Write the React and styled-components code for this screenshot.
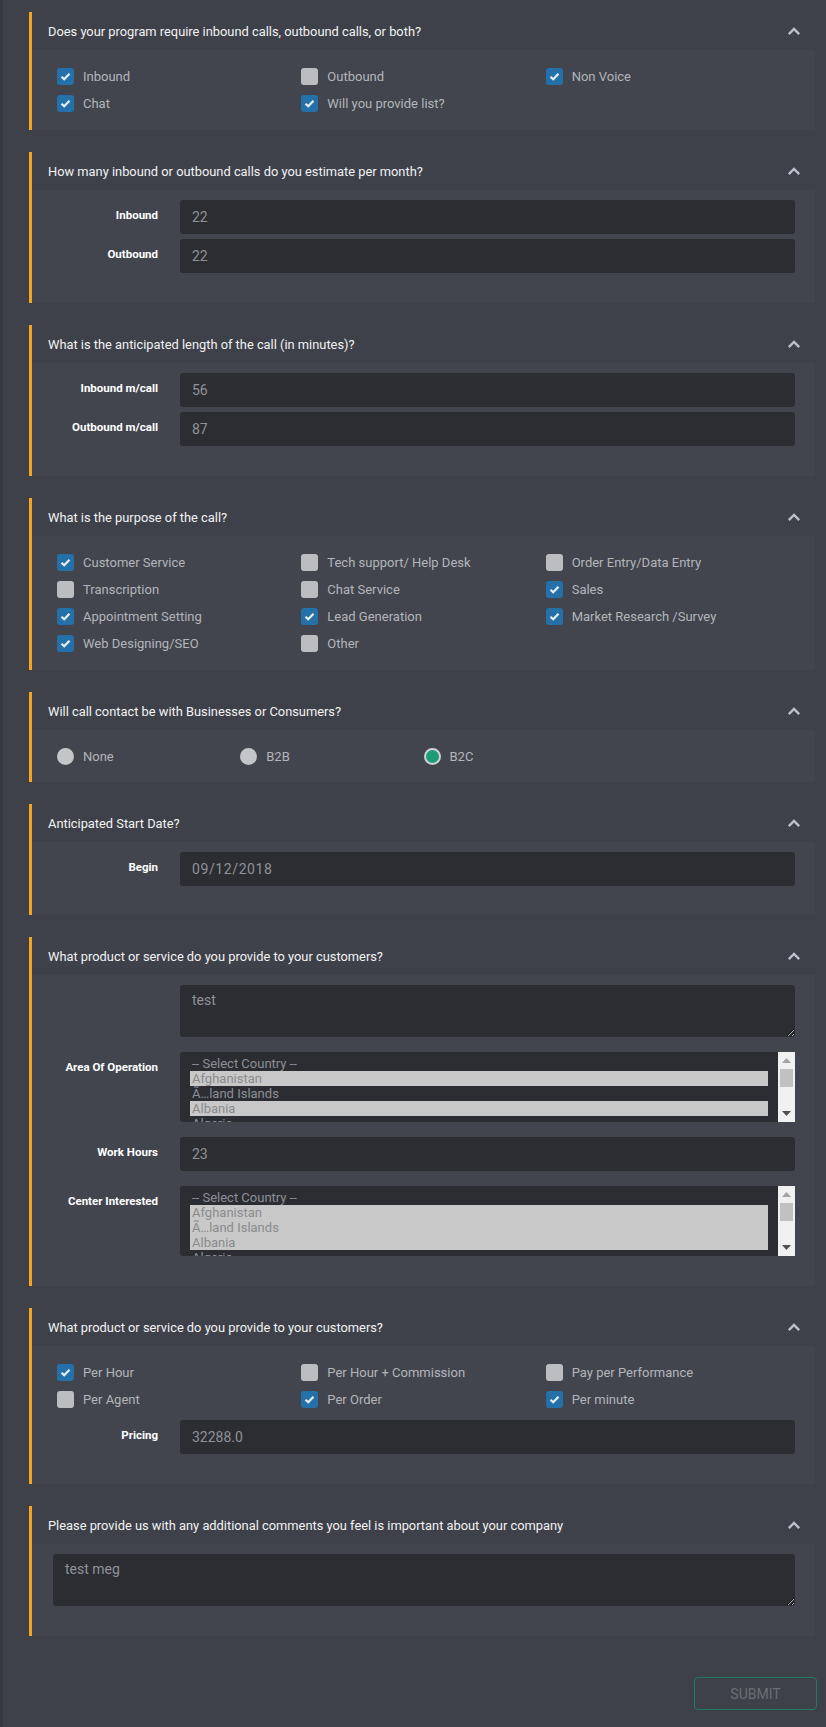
import React from "react";
import styled, { createGlobalStyle } from "styled-components";

const GlobalStyle = createGlobalStyle`
    body {
        margin: 0;
        background: #3e4149;
        font-family: Roboto, "Liberation Sans", sans-serif;
    }
`

const Page = styled.div`
    display: flex;
    flex-direction: column;
    gap: 22px;
    min-height: 1727px;
    box-sizing: border-box;
    border-left: 3px solid #383a41;
    padding: 12px 11px 17px 26px;
`

const Section = styled.section`
    border-left: 3px solid #f3a521;
`

const Head = styled.div`
    display: flex;
    align-items: center;
    justify-content: space-between;
    height: 38px;
    padding: 0 14px 0 16px;
    color: #f2f3f5;
    font-size: 12.85px;
`

const Body = styled.div`
    background: #42454e;
`

const CheckGrid = styled.div`
    display: grid;
    grid-template-columns: repeat(${p => p.$cols || 3}, 1fr);
    row-gap: 10px;
    padding: 18px 25px ${p => p.$bottom ?? 18}px;
`

const Item = styled.label`
    display: flex;
    align-items: center;
    gap: 9px;
    height: 17px;
    font-size: 13px;
    color: #b3b5ba;
`

const Box = styled.span`
    display: flex;
    align-items: center;
    justify-content: center;
    width: 17px;
    height: 17px;
    border-radius: 3px;
    background: ${p => p.$on ? "#2471a9" : "#bcbdc1"};
`

const Radio = styled.span`
    width: 17px;
    height: 17px;
    border-radius: 50%;
    box-sizing: border-box;
    background: ${p => p.$on ? "#1f9b75" : "#c4c5c9"};
    border: ${p => p.$on ? "2px solid #cdd3d6" : "none"};
`

const Form = styled.div`
    display: flex;
    flex-direction: column;
    gap: ${p => p.$gap}px;
    padding: ${p => p.$top ?? 10}px 20px ${p => p.$bottom ?? 30}px ${p => p.$left ?? 0}px;
`

const Row = styled.div`
    display: grid;
    grid-template-columns: 126px 1fr;
    column-gap: 22px;
    align-items: start;
`

const Label = styled.span`
    text-align: right;
    font-size: 11.5px;
    line-height: 13px;
    font-weight: 700;
    color: #ffffff;
    padding-top: 9px;
`

const Input = styled.input`
    height: 34px;
    box-sizing: border-box;
    background: #2c2d33;
    border: none;
    border-radius: 3px;
    padding: 0 12px;
    color: #8f9299;
    font-family: inherit;
    font-size: 14px;
    outline: none;
    letter-spacing: ${p => p.$wide ? "0.6px" : "0"};
`

const Area = styled.textarea`
    display: block;
    width: 100%;
    height: 52px;
    box-sizing: border-box;
    background: #2c2d33;
    border: none;
    border-radius: 3px;
    padding: 7px 12px;
    color: #8f9299;
    font-family: inherit;
    font-size: 14px;
    resize: vertical;
    outline: none;
`

const ListBox = styled.div`
    display: flex;
    height: 70px;
    background: #2c2d33;
    border-radius: 3px 0 0 3px;
    overflow: hidden;
`

const Options = styled.div`
    flex: 1;
    padding: 4px 10px 0;
    overflow: hidden;
`

const Option = styled.div`
    height: 15px;
    line-height: 15px;
    padding: 0 2px;
    font-size: 13px;
    white-space: nowrap;
    color: ${p => p.$sel ? "#8b8b8e" : "#8c8f95"};
    background: ${p => p.$sel ? "#c8c8c8" : "transparent"};
`

const Track = styled.div`
    display: flex;
    flex-direction: column;
    width: 17px;
    background: #f1f1f1;
`

const Arrow = styled.div`
    display: flex;
    align-items: center;
    justify-content: center;
    height: 17px;
`

const Thumb = styled.div`
    height: 18px;
    margin: 0 2px;
    background: #c1c1c1;
`

const Spacer = styled.div`
    flex: 1;
`

const Footer = styled.div`
    display: flex;
    justify-content: flex-end;
    padding-top: 19px;
    margin-right: -2px;
`

const Submit = styled.button`
    width: 123px;
    height: 33px;
    background: transparent;
    border: 1px solid #1f7c5d;
    border-radius: 4px;
    color: #6b6e75;
    font-family: inherit;
    font-size: 14px;
    text-transform: uppercase;
`

const Chevron = () => (
    <svg width="14" height="9" viewBox="0 0 14 9">
        <polyline points="1.8,7.2 7,2 12.2,7.2" fill="none" stroke="#b9c1cd" strokeWidth="2.4" />
    </svg>
)

const Tick = () => (
    <svg width="11" height="9" viewBox="0 0 11 9">
        <polyline points="1.5,4.8 4.2,7.3 9.5,1.7" fill="none" stroke="#e6eef5" strokeWidth="2.2" />
    </svg>
)

const Panel = ({ title, children }) => (
    <Section>
        <Head>
            <span>{title}</span>
            <Chevron />
        </Head>
        <Body>{children}</Body>
    </Section>
)

const Checks = ({ items, bottom }) => (
    <CheckGrid $bottom={bottom}>
        {items.map(([text, on]) => (
            <Item key={text}>
                <Box $on={on}>{on && <Tick />}</Box>
                {text}
            </Item>
        ))}
    </CheckGrid>
)

const Field = ({ label, value, wide }) => (
    <Row>
        <Label>{label}</Label>
        <Input defaultValue={value} $wide={wide} />
    </Row>
)

const countries = ["Afghanistan", "Ã…land Islands", "Albania", "Algeria", "American Samoa"]

const CountryList = ({ selected }) => (
    <ListBox>
        <Options>
            <Option>-- Select Country --</Option>
            {countries.map(c => (
                <Option key={c} $sel={selected.includes(c)}>{c}</Option>
            ))}
        </Options>
        <Track>
            <Arrow>
                <svg width="9" height="5" viewBox="0 0 9 5"><polygon points="0,5 4.5,0 9,5" fill="#a3a3a3" /></svg>
            </Arrow>
            <Thumb />
            <Spacer />
            <Arrow>
                <svg width="9" height="5" viewBox="0 0 9 5"><polygon points="0,0 9,0 4.5,5" fill="#505050" /></svg>
            </Arrow>
        </Track>
    </ListBox>
)

const App = () => {
    return (
        <Page>
            <GlobalStyle />
            <Panel title="Does your program require inbound calls, outbound calls, or both?">
                <Checks items={[["Inbound", true], ["Outbound", false], ["Non Voice", true], ["Chat", true], ["Will you provide list?", true]]} />
            </Panel>

            <Panel title="How many inbound or outbound calls do you estimate per month?">
                <Form $gap={5}>
                    <Field label="Inbound" value="22" />
                    <Field label="Outbound" value="22" />
                </Form>
            </Panel>

            <Panel title="What is the anticipated length of the call (in minutes)?">
                <Form $gap={5}>
                    <Field label="Inbound m/call" value="56" />
                    <Field label="Outbound m/call" value="87" />
                </Form>
            </Panel>

            <Panel title="What is the purpose of the call?">
                <Checks items={[
                    ["Customer Service", true], ["Tech support/ Help Desk", false], ["Order Entry/Data Entry", false],
                    ["Transcription", false], ["Chat Service", false], ["Sales", true],
                    ["Appointment Setting", true], ["Lead Generation", true], ["Market Research /Survey", true],
                    ["Web Designing/SEO", true], ["Other", false]
                ]} />
            </Panel>

            <Panel title="Will call contact be with Businesses or Consumers?">
                <CheckGrid $cols={4} $bottom={17}>
                    {[["None", false], ["B2B", false], ["B2C", true]].map(([text, on]) => (
                        <Item key={text}>
                            <Radio $on={on} />
                            {text}
                        </Item>
                    ))}
                </CheckGrid>
            </Panel>

            <Panel title="Anticipated Start Date?">
                <Form $gap={5} $bottom={29}>
                    <Field label="Begin" value="09/12/2018" wide />
                </Form>
            </Panel>

            <Panel title="What product or service do you provide to your customers?">
                <Form $gap={15}>
                    <Row>
                        <span />
                        <Area defaultValue="test" />
                    </Row>
                    <Row>
                        <Label>Area Of Operation</Label>
                        <CountryList selected={["Afghanistan", "Albania"]} />
                    </Row>
                    <Field label="Work Hours" value="23" />
                    <Row>
                        <Label>Center Interested</Label>
                        <CountryList selected={["Afghanistan", "Ã…land Islands", "Albania"]} />
                    </Row>
                </Form>
            </Panel>

            <Panel title="What product or service do you provide to your customers?">
                <Checks bottom={0} items={[
                    ["Per Hour", true], ["Per Hour + Commission", false], ["Pay per Performance", false],
                    ["Per Agent", false], ["Per Order", true], ["Per minute", true]
                ]} />
                <Form $gap={5} $top={12}>
                    <Field label="Pricing" value="32288.0" />
                </Form>
            </Panel>

            <Panel title="Please provide us with any additional comments you feel is important about your company">
                <Form $gap={5} $left={21}>
                    <Area defaultValue="test meg" />
                </Form>
            </Panel>

            <Footer>
                <Submit>Submit</Submit>
            </Footer>
        </Page>
    )
}

export default App;
